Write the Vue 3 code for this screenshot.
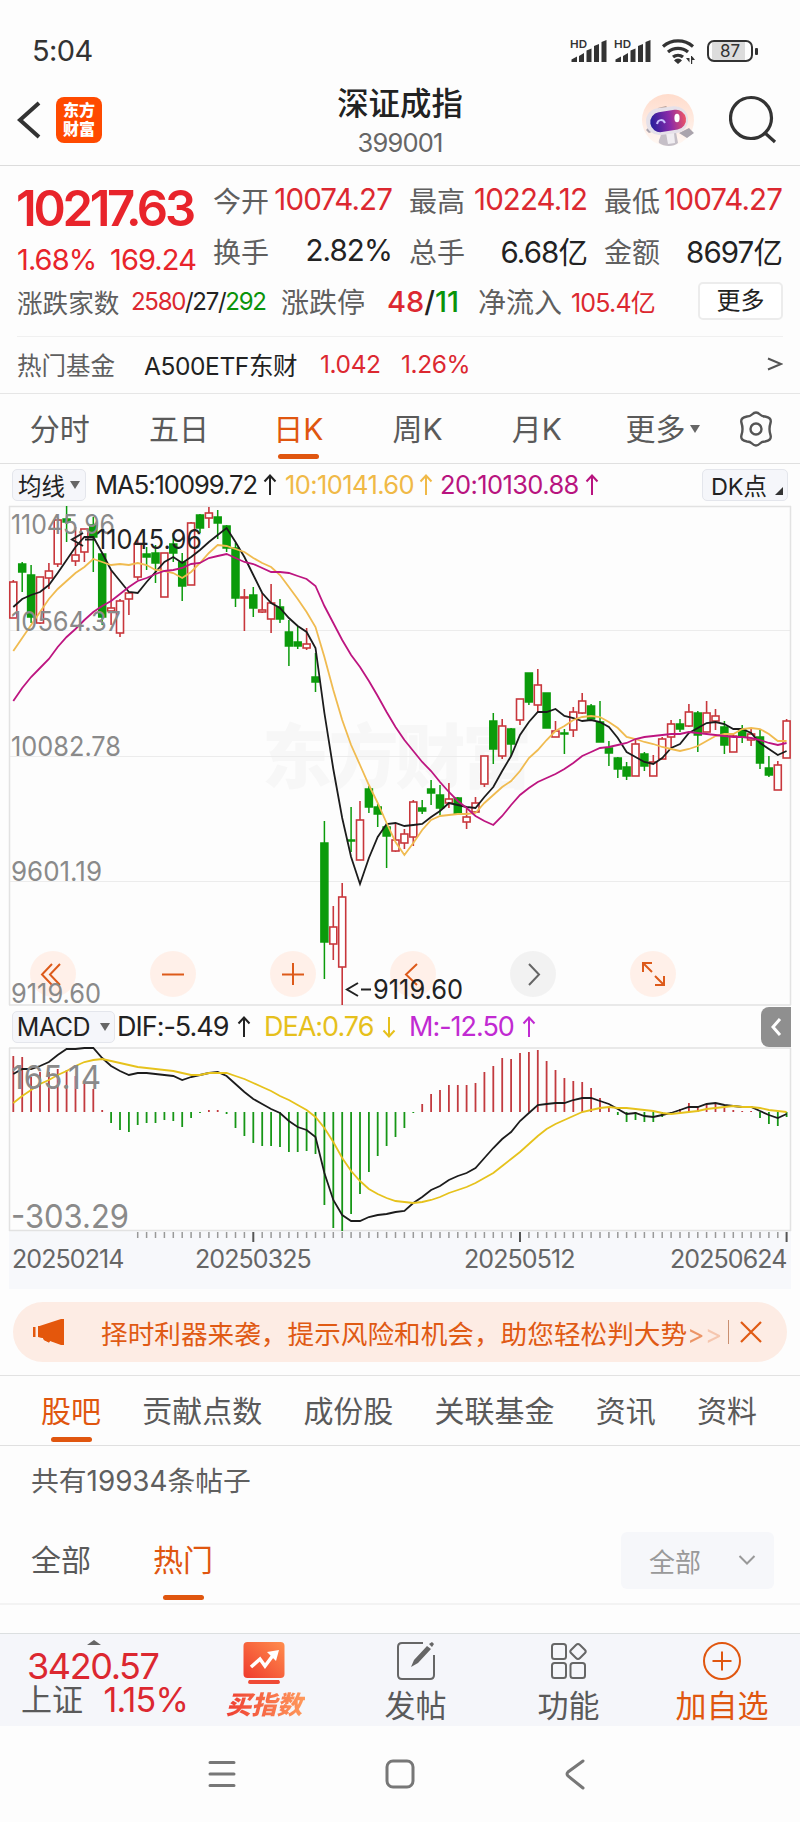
<template>
  <div class="page">
    <div class="status-bar">
      <span class="time">5:04</span>
      <div class="status-icons">
        <svg v-for="n in 2" :key="n" class="signal" width="38" height="26" viewBox="0 0 38 26">
          <text x="0" y="10" textLength="17" lengthAdjust="spacingAndGlyphs">HD</text>
          <path d="M1.500 21.500l5.500-3V24H1.500zM9 18l5-3v9H9zM16.500 12.500l5-2V24h-5zM24 8l5-2v18h-5zM31.500 4l5-2v22h-5z" />
        </svg>
        <svg class="wifi" width="36" height="28" viewBox="0 0 36 28">
          <path d="M2 9.500a23 23 0 0 1 30 0M7 15a15.500 15.500 0 0 1 20 0M12 20a8 8 0 0 1 10 0" />
          <path class="solid" d="M13 23.500a5 5 0 0 1 8 0L17 27zM25 21l3.500 4.500V21zM30 19h1.200v8H30zM31 19l3 4h-3z" />
        </svg>
        <div class="battery"><span>87</span></div>
      </div>
    </div>

    <header class="header">
      <svg class="back" width="24" height="40" viewBox="0 0 24 40">
        <path d="M22 3L3 20l19 17" />
      </svg>
      <div class="logo"><span>东方</span><span>财富</span></div>
      <div class="title">
        <h1>深证成指</h1>
        <p>399001</p>
      </div>
      <svg class="robot" width="54" height="54" viewBox="0 0 54 54">
        <defs>
          <linearGradient id="visor" x1="0" y1="0" x2="1" y2="0">
            <stop offset="0" stop-color="#25209c" />
            <stop offset="0.55" stop-color="#8b2aa8" />
            <stop offset="1" stop-color="#ee5566" />
          </linearGradient>
          <linearGradient id="halo" x1="0" y1="0" x2="0" y2="1">
            <stop offset="0" stop-color="#ffdccc" />
            <stop offset="1" stop-color="#fff8f4" />
          </linearGradient>
        </defs>
        <circle cx="27" cy="27" r="26" fill="url(#halo)" />
        <path d="M20 40c0 5-3 7-2 10 5 4 15 4 19 0l-2-11z" fill="#c5bfc7" />
        <path d="M25 40l2 11 7-1-1-10z" fill="#f0edf1" />
        <path d="M38 40l10-5 5 5-7 5zM9 33l-4 4 3 3 5-2z" fill="#aaa4ad" />
        <path d="M17 15l8-2 3 3-12 3z" fill="#b9a29a" />
        <rect x="5" y="14" width="42" height="27" rx="13" fill="#e6e1e9" transform="rotate(-7 27 27)" />
        <rect x="9" y="18" width="36" height="20" rx="10" fill="url(#visor)" transform="rotate(-9 27 27)" />
        <path d="M16 31c1-5 6-5 8-1" fill="none" stroke="#c9c2ff" stroke-width="2" />
        <ellipse cx="36" cy="25" rx="2.600" ry="4.200" fill="#fff" />
      </svg>
      <svg class="search" width="48" height="50" viewBox="0 0 48 50">
        <circle cx="22" cy="23" r="20.500" />
        <path d="M36 38l10 9" />
      </svg>
    </header>

    <section class="quote">
      <div class="quote-main">
        <div class="price">
          <div class="price-value">10217.63</div>
          <div class="price-change"><span>1.68%</span><span>169.24</span></div>
        </div>
        <div class="stats">
          <div v-for="s in stats" :key="s.label" class="stat">
            <span class="label">{{ s.label }}</span>
            <span :class="['value', s.color]">{{ s.value }}</span>
          </div>
        </div>
      </div>
      <div class="breadth">
        <span class="label count-label">涨跌家数</span>
        <span class="count"><i class="red">2580</i>/27/<i class="green">292</i></span>
        <span class="label limit-label">涨跌停</span>
        <span class="limit"><i class="red">48</i>/<i class="green">11</i></span>
        <span class="label flow-label">净流入</span>
        <span class="flow red">105.4亿</span>
        <button class="more">更多</button>
      </div>
      <div class="fund">
        <span class="label fund-label">热门基金</span>
        <span class="fund-name">A500ETF东财</span>
        <span class="fund-price">1.042</span>
        <span class="fund-rate">1.26%</span>
        <svg width="16" height="14" viewBox="0 0 16 14"><path d="M1 1.500L14 7 1 12.500" /></svg>
      </div>
    </section>

    <nav class="periods">
      <span
        v-for="p in periods"
        :key="p"
        :class="['period', { active: p === '日K' }]"
      >{{ p }}</span>
      <span class="period more-period">更多<i class="caret"></i></span>
      <svg class="gear" width="38" height="38" viewBox="0 0 38 38">
        <path d="M15 4.500Q19 .5 23 4.500Q25 6.500 28 6.500Q35 7.500 33.500 13Q31.500 19 33.500 25Q35 30.500 28 31.500Q25 31.500 23 33.500Q19 37.500 15 33.500Q13 31.500 10 31.500Q3 30.500 4.500 25Q6.500 19 4.500 13Q3 7.500 10 6.500Q13 6.500 15 4.500z" />
        <circle cx="19" cy="19" r="5.500" />
      </svg>
    </nav>

    <div class="indicator ma-row">
      <span class="picker">均线<i class="caret"></i></span>
      <span v-for="m in maLegend" :key="m.text" class="legend" :class="m.cls">
        <b>{{ m.text }}</b>
        <svg width="14" height="22" viewBox="0 0 14 22"><path :d="arrow(m.up)" /></svg>
      </span>
      <span class="picker dk">DK点<i class="corner"></i></span>
    </div>

    <svg class="chart" width="800" height="501" viewBox="0 505 800 501">
      <text class="watermark" x="262" y="783" textLength="270">东方财富</text>
      <path class="grid" d="M10 630.500H790M10 756.500H790M10 881.500H790" />
      <path class="frame" d="M9 506.500H791M9.500 506V1005M790.500 506V1005M9 1005H791" />

      <g v-for="(c, i) in candles" :key="i" :class="c[4] ? 'up' : 'down'">
        <path :d="wick(c, i)" />
        <rect :x="x(i) - 3.500" :y="c[1]" width="7" :height="Math.max(c[2] - c[1], 1)" />
      </g>

      <g class="tools">
        <circle v-for="cx in [53, 173, 293, 413, 653]" :key="cx" :cx="cx" cy="974" r="23" />
        <circle class="disabled" cx="533" cy="974" r="23" />
        <path d="M52 964l-10 10.500 10 10.500M60 964l-10 10.500L60 985M162 974.500h22M282 974.500h22M293 963v22M417 964l-11 10.500 11 10.500" />
        <path d="M643 972v-9h9M643 963l9 9M655 976l9 9M664 976v9h-9" />
        <path class="disabled" d="M529 964l10 10.500-10 10.500" />
      </g>

      <polyline class="ma5" :points="line(ma5)" />
      <polyline class="ma10" :points="line(ma10)" />
      <polyline class="ma20" :points="line(ma20)" />

      <text
        v-for="l in priceLabels"
        :key="l.text"
        class="axis"
        x="11"
        :y="l.y"
        :textLength="l.w"
        lengthAdjust="spacingAndGlyphs"
      >{{ l.text }}</text>
      <text class="mark" x="96" y="548.500" textLength="106" lengthAdjust="spacingAndGlyphs">11045.96</text>
      <path class="mark-arrow" d="M83 533l-11 6.500 11 6.500M85 539.500h10" />
      <text class="mark" x="373" y="999" textLength="90" lengthAdjust="spacingAndGlyphs">9119.60</text>
      <path class="mark-arrow" d="M358 983l-11 6.500 11 6.500M361 989.500h10" />
    </svg>

    <div class="indicator macd-row">
      <span class="picker">MACD<i class="caret"></i></span>
      <span v-for="m in macdLegend" :key="m.text" class="legend" :class="m.cls">
        <b>{{ m.text }}</b>
        <svg width="14" height="24" viewBox="0 0 14 22"><path :d="arrow(m.up)" /></svg>
      </span>
      <span class="collapse">
        <svg width="12" height="20" viewBox="0 0 12 20"><path d="M10 2L3 10l7 8" /></svg>
      </span>
    </div>

    <svg class="chart" width="800" height="184" viewBox="0 1047 800 184">
      <path class="frame" d="M9 1048H791M9.500 1048V1231M790.500 1048V1231M9 1230.500H791" />
      <path
        v-for="(b, i) in bars"
        :key="i"
        :class="b < 1112 ? 'bar-up' : 'bar-down'"
        :d="`M${x(i)} 1112V${b}`"
      />
      <polyline class="ma5" :points="line(dif)" />
      <polyline class="dea" :points="line(dea)" />
      <text class="axis big" x="11" y="1089" textLength="90" lengthAdjust="spacingAndGlyphs">165.14</text>
      <text class="axis big" x="11" y="1228" textLength="118" lengthAdjust="spacingAndGlyphs">-303.29</text>
    </svg>

    <div class="dates">
      <svg width="782" height="12" viewBox="9 1231 782 12">
        <path
          v-for="i in ticks"
          :key="i"
          :class="{ major: majors.includes(i) }"
          :d="`M${x(i)} 1232V${majors.includes(i) ? 1242 : 1238}`"
        />
      </svg>
      <div class="date-labels">
        <span>20250214</span>
        <span>20250325</span>
        <span>20250512</span>
        <span>20250624</span>
      </div>
    </div>

    <div class="notice">
      <svg class="horn" width="34" height="30" viewBox="0 0 34 30">
        <path d="M1 10h2.500v10H1zM6 9h26V2v26l-14-4.500-1 2-5-2.500-1-2-4-1z" />
        <path d="M6 9.500L29 2h3v26h-3L18 24l-1 1.500-5-2.500-1-2-5-1z" />
      </svg>
      <p>择时利器来袭，提示风险和机会，助您轻松判大势<i>&gt;</i><i class="faded">&gt;</i></p>
      <span class="divider"></span>
      <svg class="close" width="24" height="24" viewBox="0 0 24 24"><path d="M2 2l20 20M22 2L2 22" /></svg>
    </div>

    <nav class="sections">
      <span
        v-for="s in sections"
        :key="s"
        :class="['section', { active: s === '股吧' }]"
      >{{ s }}</span>
    </nav>

    <div class="posts">
      <p class="post-count">共有19934条帖子</p>
      <div class="filters">
        <span class="filter">全部</span>
        <span class="filter active">热门</span>
        <span class="select">
          全部
          <svg width="18" height="12" viewBox="0 0 18 12"><path d="M1.500 2L9 9.500 16.500 2" /></svg>
        </span>
      </div>
    </div>

    <footer class="toolbar">
      <div class="index">
        <i class="index-caret"></i>
        <div class="index-value">3420.57</div>
        <div class="index-change"><span>上证</span><b>1.15%</b></div>
      </div>
      <div class="tool buy">
        <svg width="44" height="44" viewBox="0 0 44 44">
          <defs>
            <linearGradient id="buy" x1="1" y1="0" x2="0" y2="1">
              <stop offset="0" stop-color="#ff8d4d" />
              <stop offset="1" stop-color="#ef3b2d" />
            </linearGradient>
          </defs>
          <rect x="1.500" y="1" width="41" height="36" rx="4" fill="url(#buy)" />
          <path d="M7 39h30l1 2q0 2-2 2H8q-2 0-2-2z" fill="#ef4a35" />
          <path d="M9 26l9-8 5 7 9-12" fill="none" stroke="#fff" stroke-width="3.500" />
          <path d="M25 11l12-2-3 11z" fill="#fff" />
        </svg>
        <span>买指数</span>
      </div>
      <div class="tool">
        <svg width="40" height="40" viewBox="0 0 40 40">
          <path d="M27 2H6q-4 0-4 4v28q0 4 4 4h28q4 0 4-4V14" />
          <path class="pen" d="M33 3l3-2 2 2-2 3zM31 5l4 3-13 14-7 4 3-7z" />
        </svg>
        <span>发帖</span>
      </div>
      <div class="tool">
        <svg width="40" height="40" viewBox="0 0 40 40">
          <rect x="3" y="3" width="14" height="15" rx="2.500" />
          <rect x="3" y="22" width="14" height="15" rx="2.500" />
          <rect x="21.500" y="22" width="14.500" height="15" rx="2.500" />
          <path d="M27 4q2-2 4 0l5 5q1.500 1.500 0 3l-5 5q-2 2-4 0l-5-5q-1.500-1.500 0-3z" />
        </svg>
        <span>功能</span>
      </div>
      <div class="tool add">
        <svg width="40" height="40" viewBox="0 0 40 40">
          <circle cx="20" cy="20" r="18" />
          <path d="M20 10.500v19M10.500 20h19" />
        </svg>
        <span>加自选</span>
      </div>
    </footer>

    <div class="system-nav">
      <svg width="30" height="32" viewBox="0 0 30 32"><path d="M3 4.500h24M3 16h24M3 27.500h24" /></svg>
      <svg width="32" height="32" viewBox="0 0 32 32"><rect x="3" y="3" width="26" height="26" rx="6" /></svg>
      <svg width="24" height="34" viewBox="0 0 24 34"><path d="M20 4L5 15q-2 2 0 4l15 12" /></svg>
    </div>
  </div>
</template>

<script setup>
const stats = [
  { label: '今开', value: '10074.27', color: 'red' },
  { label: '最高', value: '10224.12', color: 'red' },
  { label: '最低', value: '10074.27', color: 'red' },
  { label: '换手', value: '2.82%', color: 'dark' },
  { label: '总手', value: '6.68亿', color: 'dark' },
  { label: '金额', value: '8697亿', color: 'dark' }
]

const periods = ['分时', '五日', '日K', '周K', '月K']
const sections = ['股吧', '贡献点数', '成份股', '关联基金', '资讯', '资料']

const maLegend = [
  { text: 'MA5:10099.72', cls: 'c-dark', up: true },
  { text: '10:10141.60', cls: 'c-yellow', up: true },
  { text: '20:10130.88', cls: 'c-pink', up: true }
]

const macdLegend = [
  { text: 'DIF:-5.49', cls: 'c-dark', up: true },
  { text: 'DEA:0.76', cls: 'c-gold', up: false },
  { text: 'M:-12.50', cls: 'c-purple', up: true }
]

const priceLabels = [
  { text: '11045.96', y: 534, w: 104 },
  { text: '10564.37', y: 631, w: 110 },
  { text: '10082.78', y: 756, w: 110 },
  { text: '9601.19', y: 880.5, w: 91 },
  { text: '9119.60', y: 1002.5, w: 90 }
]

// [high, body top, body bottom, low, rising]
const candles = [
  [580, 582, 618, 618, 1], [562, 564, 572, 592, 0], [565, 575, 617, 623, 0], [577, 577, 623, 624, 1],
  [563, 571, 578, 589, 1], [518, 520, 564, 567, 1], [506, 519, 522, 542, 0], [527, 555, 561, 566, 1],
  [529, 529, 552, 562, 1], [517, 525, 537, 572, 0], [553, 554, 617, 625, 0], [570, 608, 611, 625, 1],
  [599, 601, 633, 637, 1], [592, 593, 599, 615, 1], [538, 544, 577, 580, 1], [547, 554, 557, 570, 0],
  [545, 553, 563, 583, 0], [553, 553, 597, 597, 1], [533, 544, 553, 562, 0], [553, 562, 586, 601, 0],
  [522, 523, 585, 585, 1], [514, 515, 528, 533, 0], [507, 513, 518, 528, 1], [510, 517, 523, 539, 0],
  [525, 526, 548, 552, 0], [543, 548, 598, 607, 0], [589, 597, 597, 631, 1], [587, 595, 608, 617, 0],
  [593, 610, 612, 613, 1], [584, 603, 619, 633, 1], [599, 607, 619, 623, 0], [620, 632, 646, 666, 0],
  [626, 642, 646, 649, 0], [628, 644, 648, 650, 1], [653, 677, 682, 692, 0], [821, 843, 942, 979, 0],
  [906, 927, 944, 960, 1], [883, 897, 967, 1005, 1], [807, 840, 841, 852, 0], [801, 820, 860, 860, 1],
  [786, 789, 807, 813, 0], [804, 807, 814, 827, 0], [823, 827, 836, 868, 0], [823, 840, 851, 852, 1],
  [829, 834, 843, 849, 1], [800, 802, 837, 846, 1], [800, 808, 811, 814, 0], [780, 789, 793, 805, 0],
  [785, 795, 808, 815, 0], [783, 799, 803, 808, 1], [797, 798, 814, 815, 0], [809, 817, 822, 829, 1],
  [797, 803, 812, 813, 1], [756, 756, 784, 787, 1], [713, 721, 749, 764, 0], [719, 726, 756, 759, 1],
  [728, 729, 744, 756, 0], [699, 699, 720, 725, 1], [673, 673, 702, 705, 0], [669, 685, 705, 713, 1],
  [693, 693, 728, 728, 0], [721, 731, 737, 737, 1], [729, 733, 733, 754, 0], [707, 712, 730, 737, 1],
  [693, 701, 713, 714, 1], [704, 706, 719, 719, 0], [701, 722, 742, 742, 0], [741, 748, 753, 766, 0],
  [757, 758, 769, 778, 0], [762, 767, 776, 780, 0], [740, 744, 776, 776, 1], [752, 754, 766, 771, 0],
  [755, 762, 776, 776, 1], [737, 739, 759, 759, 1], [720, 724, 737, 747, 1], [719, 724, 729, 732, 0],
  [704, 712, 726, 727, 1], [711, 713, 735, 752, 0], [701, 713, 732, 732, 1], [709, 716, 721, 730, 1],
  [721, 727, 745, 754, 0], [733, 736, 752, 752, 1], [725, 729, 737, 743, 0], [728, 734, 740, 746, 1],
  [730, 737, 763, 769, 0], [756, 768, 775, 777, 0], [761, 765, 790, 790, 1], [719, 721, 758, 758, 1]
]

const ma5 = [
  607, 599, 595, 592, 585, 573, 560, 547, 537, 537, 553, 570, 581, 592, 593, 582, 572, 562, 557, 563, 557, 550,
  542, 535, 528, 542, 557, 575, 593, 603, 608, 618, 626, 632, 648, 713, 769, 818, 857, 884, 858, 837, 824, 823,
  826, 825, 824, 817, 811, 803, 805, 807, 808, 797, 787, 771, 756, 735, 722, 712, 712, 709, 716, 718, 721, 720,
  722, 727, 738, 752, 757, 762, 764, 758, 748, 744, 733, 728, 723, 722, 724, 729, 729, 733, 743, 749, 755, 751
]

const ma10 = [
  651, 638, 625, 612, 599, 589, 581, 573, 567, 559, 562, 565, 564, 565, 563, 565, 570, 571, 573, 578, 572, 563,
  553, 545, 546, 549, 552, 558, 563, 567, 575, 587, 599, 612, 627, 657, 690, 720, 745, 765, 785, 803, 823, 842,
  855, 843, 830, 820, 816, 815, 814, 814, 813, 803, 795, 787, 781, 771, 758, 750, 740, 731, 726, 720, 717, 716,
  717, 722, 728, 737, 739, 742, 744, 747, 749, 751, 749, 746, 741, 736, 734, 734, 729, 728, 729, 734, 741, 741
]

const ma20 = [
  701, 688, 677, 668, 659, 647, 637, 629, 620, 612, 606, 601, 594, 587, 581, 578, 574, 571, 570, 568, 564, 563,
  558, 556, 554, 558, 562, 564, 568, 572, 572, 573, 576, 579, 586, 606, 623, 640, 655, 667, 681, 696, 712, 727,
  740, 751, 762, 771, 782, 792, 801, 808, 816, 821, 825, 816, 805, 795, 788, 782, 778, 774, 769, 763, 756, 752,
  748, 747, 745, 743, 739, 737, 736, 735, 734, 734, 732, 733, 734, 735, 736, 737, 737, 738, 740, 743, 745, 743
]

const bars = [
  1056, 1057, 1077, 1072, 1072, 1069, 1070, 1076, 1083, 1089, 1110, 1123, 1130, 1132, 1125, 1123, 1123, 1120,
  1121, 1127, 1118, 1113, 1110, 1110, 1114, 1128, 1136, 1143, 1146, 1146, 1147, 1152, 1152, 1151, 1154, 1205,
  1228, 1231, 1214, 1194, 1172, 1156, 1146, 1137, 1128, 1113, 1104, 1094, 1090, 1085, 1085, 1085, 1083, 1072,
  1066, 1058, 1059, 1053, 1052, 1050, 1061, 1070, 1078, 1081, 1082, 1088, 1098, 1107, 1115, 1122, 1120, 1122,
  1122, 1117, 1112.5, 1109, 1103, 1107, 1104, 1104, 1108, 1110, 1111, 1111, 1118, 1124, 1126, 1117
]

const dif = [
  1074, 1069, 1069, 1066, 1062, 1055, 1049, 1049, 1048, 1048, 1058, 1066, 1071, 1075, 1073, 1073, 1074, 1075,
  1076, 1080, 1077, 1075, 1073, 1072, 1076, 1084, 1092, 1099, 1104, 1109, 1113, 1121, 1127, 1130, 1137, 1173,
  1200, 1215, 1221, 1221, 1217, 1215, 1214, 1212, 1211, 1203, 1197, 1190, 1186, 1180, 1176, 1173, 1168, 1158,
  1148, 1139, 1132, 1121, 1113, 1105, 1104, 1103, 1103, 1100, 1098, 1098, 1101, 1104, 1109, 1114, 1113, 1116,
  1117, 1115, 1113, 1110, 1107, 1107, 1104, 1103, 1105, 1106, 1107, 1107, 1111, 1115, 1118, 1114
]

const dea = [
  1103, 1096, 1090, 1084, 1080, 1075, 1071, 1066, 1062, 1060, 1059, 1061, 1063, 1065, 1067, 1068, 1069, 1070,
  1071, 1073, 1075, 1075, 1073, 1073, 1073, 1076, 1079, 1083, 1087, 1091, 1096, 1100, 1105, 1110, 1117, 1128,
  1142, 1158, 1171, 1181, 1189, 1194, 1198, 1201, 1202, 1203, 1202, 1200, 1197, 1193, 1190, 1187, 1183, 1178,
  1173, 1166, 1159, 1152, 1144, 1136, 1129, 1124, 1120, 1116, 1112, 1110, 1108, 1107, 1108, 1108, 1109, 1110,
  1111, 1113, 1114, 1113, 1112, 1111, 1109, 1108, 1107, 1106, 1107, 1107, 1108, 1110, 1111, 1112
]

const majors = [27, 57, 87]
const ticks = Array.from({ length: 74 }, (_, i) => i + 14)

const x = (i) => +(13.3 + i * 8.889).toFixed(1)
const line = (ys) => ys.map((y, i) => `${x(i)},${y}`).join(' ')
const wick = (c, i) => `M${x(i)} ${c[0]}V${c[1]}M${x(i)} ${c[2]}V${c[3]}`
const arrow = (up) => (up ? 'M7 21V2M1.5 7.5L7 1.5l5.500 6' : 'M7 1v19M1.500 14.500L7 20.500l5.500-6')
</script>

<style>
body {
  background: #fdfdfd;
}
</style>

<style scoped>
.page {
  width: 800px;
  height: 1822px;
  overflow: hidden;
  background: #fdfdfd;
  color: #222;
  font-family: Inter, "Noto Sans CJK SC", sans-serif;
}

i,
b {
  font-style: normal;
  font-weight: 400;
}

h1,
p {
  margin: 0;
  font-weight: 400;
}

svg {
  flex: none;
}

.red {
  color: #dc2830;
}

.green {
  color: #0a930a;
}

.dark {
  color: #222;
}

.label {
  color: #5f5f5f;
}

.status-bar {
  display: flex;
  justify-content: space-between;
  align-items: center;
  height: 48px;
  padding: 27px 42px 0 32px;
}

.time {
  margin-top: -2px;
  font-size: 29px;
  color: #333;
  letter-spacing: -0.6px;
}

.status-icons {
  display: flex;
  align-items: center;
}

.signal {
  margin-right: 6px;
  fill: #333;
}

.signal text {
  font-size: 11px;
  font-weight: 600;
}

.wifi {
  margin: 0 10px 0 3px;
  fill: none;
  stroke: #333;
  stroke-width: 3.2;
}

.wifi .solid {
  fill: #333;
  stroke: none;
}

.battery {
  position: relative;
  box-sizing: border-box;
  width: 46px;
  height: 22px;
  margin-right: 5px;
  border: 2px solid #333;
  border-radius: 7px;
  background: linear-gradient(90deg, #fdfdfd 3px, #dcdcdc 3px, #dcdcdc 36px, #fdfdfd 36px);
  text-align: center;
  font-size: 17px;
  line-height: 19px;
  color: #333;
}

.battery::after {
  content: '';
  position: absolute;
  right: -7px;
  top: 6px;
  width: 3px;
  height: 7px;
  border-radius: 1px;
  background: #333;
}

.header {
  position: relative;
  display: flex;
  align-items: center;
  box-sizing: border-box;
  height: 91px;
  padding: 0 23px 0 17px;
  border-bottom: 1px solid #dcdcdc;
}

.back {
  fill: none;
  stroke: #333;
  stroke-width: 4;
}

.logo {
  display: flex;
  flex-direction: column;
  align-items: center;
  justify-content: center;
  width: 46px;
  height: 46px;
  margin-left: 15px;
  border-radius: 8px;
  background: #ff4a00;
  color: #fff;
  font-size: 16px;
  font-weight: 900;
  line-height: 19px;
}

.title {
  position: absolute;
  left: 0;
  right: 0;
  top: 6px;
  text-align: center;
}

.title h1 {
  font-size: 31.400px;
  line-height: 46px;
  font-weight: 500;
}

.title p {
  font-size: 25.500px;
  line-height: 32px;
  letter-spacing: -0.8px;
  color: #666;
}

.robot {
  margin-left: auto;
}

.search {
  margin-left: 34px;
  fill: none;
  stroke: #333;
  stroke-width: 3.2;
}

.quote {
  padding: 0 17px;
}

.quote-main {
  display: flex;
  height: 111px;
}

.price {
  width: 196px;
  color: #e8242b;
}

.price-value {
  margin-top: 18px;
  margin-left: -1px;
  font-size: 49px;
  line-height: 50px;
  font-weight: 600;
  letter-spacing: -3.300px;
}

.price-change {
  display: flex;
  justify-content: space-between;
  width: 179px;
  margin-top: 10px;
  font-size: 29px;
  line-height: 32px;
  letter-spacing: -0.9px;
}

.stats {
  display: grid;
  grid-template-columns: 179px 178px 178px;
  column-gap: 17px;
  grid-template-rows: 51px 51px;
  margin-top: 8px;
}

.stat {
  display: flex;
  justify-content: space-between;
  align-items: center;
  font-size: 28px;
  white-space: nowrap;
}

.stat .value {
  margin-top: -2px;
  font-size: 29.500px;
  letter-spacing: -0.9px;
}

.breadth {
  display: flex;
  align-items: center;
  height: 48px;
  padding-bottom: 11px;
  border-bottom: 1px solid #f0f0f0;
  white-space: nowrap;
}

.count-label {
  width: 114px;
  font-size: 25.6px;
}

.count {
  width: 150px;
  font-size: 24px;
  letter-spacing: -1.300px;
}

.limit-label {
  width: 106px;
  font-size: 28px;
}

.limit {
  width: 91px;
  font-size: 29px;
  font-weight: 500;
}

.limit i {
  font-weight: 500;
}

.flow-label {
  width: 93px;
  font-size: 28px;
}

.flow {
  font-size: 25px;
  letter-spacing: -0.8px;
}

.more {
  width: 85px;
  height: 38px;
  margin-left: auto;
  padding: 0;
  border: 2px solid #ececec;
  border-radius: 5px;
  background: #fff;
  font: 24px/32px Inter, "Noto Sans CJK SC", sans-serif;
  color: #222;
}

.fund {
  display: flex;
  align-items: center;
  box-sizing: border-box;
  height: 56px;
  padding-bottom: 2px;
  font-size: 24.500px;
  letter-spacing: -0.4px;
}

.fund-label {
  width: 127px;
  letter-spacing: 0;
}

.fund-name {
  width: 176px;
}

.fund-price {
  width: 81px;
  color: #dc2830;
}

.fund-rate {
  color: #dc2830;
}

.fund svg {
  margin-left: auto;
  fill: none;
  stroke: #555;
  stroke-width: 2;
}

.periods {
  display: flex;
  align-items: center;
  height: 69px;
  border-top: 1px solid #e6e6e6;
  border-bottom: 1px solid #e0e0e0;
  font-size: 30px;
  color: #5a5a5a;
}

.period {
  position: relative;
  width: 119.300px;
  text-align: center;
  line-height: 68px;
}

.active {
  color: #e0560f;
}

.active::after {
  content: '';
  position: absolute;
  left: 50%;
  bottom: 4px;
  width: 41px;
  height: 5px;
  margin-left: -20px;
  border-radius: 3px;
  background: #e0560f;
}

.more-period {
  display: flex;
  align-items: center;
  width: auto;
  margin-left: 29px;
}

.caret {
  display: inline-block;
  margin-left: 5px;
  border: 5px solid transparent;
  border-top: 8px solid #666;
  border-bottom: 0;
}

.gear {
  margin-left: 37px;
  fill: none;
  stroke: #555;
  stroke-width: 2.4;
}

.indicator {
  position: relative;
  display: flex;
  align-items: center;
  height: 41px;
  padding-left: 12px;
}

.picker {
  display: flex;
  align-items: center;
  justify-content: center;
  box-sizing: border-box;
  width: 74px;
  height: 32px;
  border: 1px solid #e4e6ec;
  border-radius: 5px;
  background: #f5f6fa;
  font-size: 23.500px;
}

.ma-row .picker {
  margin-right: 9px;
}

.legend {
  display: flex;
  align-items: center;
  font-size: 25.500px;
  letter-spacing: -0.6px;
  white-space: nowrap;
}

.legend b {
  flex: 1;
}

.legend svg {
  fill: none;
  stroke: currentColor;
  stroke-width: 2;
}

.ma-row .c-dark {
  width: 182px;
  margin-right: 8px;
  letter-spacing: -1px;
}

.c-yellow {
  width: 148px;
  margin-right: 7px;
  color: #f0b947;
}

.c-pink {
  width: 159px;
  color: #b8137f;
}

.ma-row .dk {
  position: relative;
  width: 86px;
  margin: 0 12px 0 auto;
  padding-right: 12px;
}

.corner {
  position: absolute;
  right: 4px;
  bottom: 5px;
  border-left: 8px solid transparent;
  border-bottom: 8px solid #333;
}

.chart {
  display: block;
  overflow: visible;
  fill: none;
}

.frame {
  stroke: #e2e2e2;
  stroke-width: 1.500;
}

.grid {
  stroke: #ececec;
}

.watermark {
  fill: #f7f7f7;
  font-size: 70px;
  font-weight: 900;
}

.up {
  fill: #fff;
  stroke: #c8373c;
  stroke-width: 1.600;
}

.down {
  fill: #0b9b0b;
  stroke: #0b9b0b;
  stroke-width: 1.500;
}

.tools circle {
  fill: #ffeee7;
  fill-opacity: 0.9;
}

.tools path {
  stroke: #dd5a1a;
  stroke-width: 2;
}

.tools circle.disabled {
  fill: #f1f1f1;
}

.tools path.disabled {
  stroke: #666;
}

.ma5 {
  stroke: #1c1c1c;
  stroke-width: 1.800;
}

.ma10 {
  stroke: #f0bb50;
  stroke-width: 1.800;
}

.ma20 {
  stroke: #bd1580;
  stroke-width: 1.800;
}

.dea {
  stroke: #e6c21c;
  stroke-width: 1.800;
}

.axis {
  fill: #8a8a8a;
  font-size: 27px;
}

.axis.big {
  font-size: 33px;
}

.mark {
  fill: #222;
  font-size: 27px;
}

.mark-arrow {
  stroke: #222;
  stroke-width: 2;
}

.macd-row .picker {
  width: 103px;
  margin-right: 2px;
  font-size: 25px;
  letter-spacing: -0.5px;
}

.macd-row .caret {
  margin-left: 10px;
}

.macd-row .legend {
  font-size: 27px;
  letter-spacing: -1px;
}

.macd-row .c-dark {
  width: 134px;
  margin-right: 13px;
}

.c-gold {
  width: 132px;
  margin-right: 13px;
  color: #e6c01c;
}

.c-purple {
  width: 127px;
  color: #c12ad2;
}

.collapse {
  display: flex;
  align-items: center;
  justify-content: center;
  width: 30px;
  height: 40px;
  margin: 0 9px 0 auto;
  border-radius: 8px 0 0 8px;
  background: #8f8f8f;
}

.collapse path {
  fill: none;
  stroke: #fff;
  stroke-width: 3;
}

.bar-up {
  stroke: #c23a3f;
  stroke-width: 1.800;
}

.bar-down {
  stroke: #169616;
  stroke-width: 1.800;
}

.dates {
  width: 782px;
  height: 58px;
  margin-left: 9px;
  background: #f7f8fb;
}

.dates svg {
  display: block;
}

.dates path {
  stroke: #999;
  stroke-width: 1.500;
}

.dates path.major {
  stroke: #555;
  stroke-width: 2;
}

.date-labels {
  display: grid;
  grid-template-columns: 183px 269px 206px auto;
  padding-left: 3px;
  font-size: 25px;
  line-height: 32px;
  letter-spacing: -0.9px;
  color: #666;
}

.notice {
  display: flex;
  align-items: center;
  box-sizing: border-box;
  width: 774px;
  height: 60px;
  margin: 13px 0 13px 13px;
  padding-left: 19px;
  border-radius: 30px;
  background: #fdece4;
  color: #e05a14;
}

.horn {
  fill: #e4570c;
}

.notice p {
  width: 627px;
  margin-left: 35px;
  font-size: 26.650px;
  white-space: nowrap;
}

.notice p i {
  opacity: 0.6;
}

.notice p i.faded {
  opacity: 0.25;
}

.divider {
  width: 1px;
  height: 24px;
  background: #c98f70;
}

.close {
  margin-left: 10px;
  stroke: #e05a14;
  stroke-width: 2.2;
}

.sections {
  display: flex;
  align-items: center;
  gap: 41.200px;
  height: 69px;
  padding-left: 41px;
  border-top: 1px solid #e2e2e2;
  border-bottom: 1px solid #e0e0e0;
  font-size: 30px;
  color: #5a5a5a;
}

.section {
  position: relative;
  line-height: 70px;
}

.section.active,
.filter.active {
  color: #e0560f;
}

.posts {
  height: 157px;
  border-bottom: 2px solid #f3f3f3;
}

.post-count {
  padding: 15px 0 0 31px;
  font-size: 27.800px;
  line-height: 40px;
  color: #5f5f5f;
}

.filters {
  display: flex;
  align-items: center;
  height: 84px;
  margin-top: 17px;
  padding: 0 26px 0 31px;
  font-size: 30px;
  color: #5a5a5a;
}

.filter {
  position: relative;
  margin-right: 62px;
  line-height: 78px;
}

.filter.active::after {
  bottom: -1px;
}

.select {
  display: flex;
  align-items: center;
  justify-content: space-between;
  box-sizing: border-box;
  width: 153px;
  height: 57px;
  margin-left: auto;
  padding: 0 18px 0 28px;
  border-radius: 6px;
  background: #f6f7fa;
  font-size: 26px;
  color: #999;
}

.select svg {
  fill: none;
  stroke: #999;
  stroke-width: 2;
}

.toolbar {
  display: flex;
  height: 92px;
  margin-top: 28px;
  border-top: 1px solid #dcdfe0;
  background: #f5f6fa;
}

.index {
  position: relative;
  box-sizing: border-box;
  width: 188px;
  padding-left: 21px;
}

.index-caret {
  position: absolute;
  left: 87px;
  top: 6px;
  border: 7px solid transparent;
  border-top: 0;
  border-bottom: 5px solid #666;
}

.index-value {
  margin: 13px 0 0 6px;
  font-size: 36px;
  line-height: 38px;
  letter-spacing: -1.400px;
  color: #dc2830;
}

.index-change {
  display: flex;
  align-items: center;
  justify-content: space-between;
  width: 167px;
  font-size: 31px;
  line-height: 30px;
  color: #5a5a5a;
}

.index-change b {
  font-size: 34px;
  letter-spacing: -0.8px;
  color: #dc2830;
}

.tool {
  display: flex;
  flex-direction: column;
  align-items: center;
  width: 153px;
  padding-top: 7px;
  font-size: 31px;
  line-height: 50px;
  color: #5a5a5a;
}

.tool svg {
  fill: none;
  stroke: #666;
  stroke-width: 2;
}

.tool .pen {
  fill: #666;
  stroke: none;
}

.buy {
  width: 152px;
  margin-right: -1px;
}

.buy svg {
  stroke: none;
}

.buy span {
  padding: 0 3px;
  background: linear-gradient(90deg, #ee3b30, #ff9a5c);
  -webkit-background-clip: text;
  background-clip: text;
  color: transparent;
  font-size: 25.500px;
  font-weight: 900;
  font-style: italic;
  line-height: 39px;
}

.tool.add {
  width: 154px;
  color: #e0560f;
}

.add svg {
  stroke: #e0560f;
}

.system-nav {
  display: flex;
  align-items: center;
  justify-content: space-between;
  height: 96px;
  padding: 0 213px 0 207px;
}

.system-nav svg {
  fill: none;
  stroke: #777;
  stroke-width: 3;
  stroke-linecap: round;
}
</style>
